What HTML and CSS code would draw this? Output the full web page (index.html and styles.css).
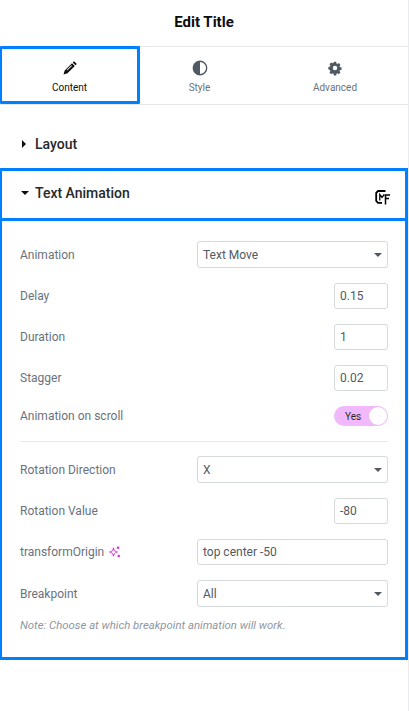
FILE: index.html
```html
<!DOCTYPE html>
<html lang="en">
<head>
<meta charset="utf-8">
<title>Edit Title</title>
<link rel="stylesheet" href="styles.css">
</head>
<body>
<div class="panel">
  <header class="title">Edit Title</header>
  <nav class="tabs">
    <div class="tab tab-active">
      <svg class="tab-icon" viewBox="0 0 16 16"><path fill="#0c0d0e" d="M12 1.200 14.800 4 13.500 5.300 10.700 2.500ZM10 3.200 12.800 6 5.500 13.300 1.500 14.500 2.700 10.500Z"/><path fill="#fff" d="M9.300 5.300 9.900 5.900 5.200 10.600 4.600 10Z"/></svg>
      <span>Content</span>
    </div>
    <div class="tab">
      <svg class="tab-icon" viewBox="0 0 16 16"><circle cx="8" cy="8" r="6.700" fill="none" stroke="#515962" stroke-width="1.400"/><path fill="#515962" d="M8 1.300A6.700 6.700 0 0 0 8 14.700Z"/></svg>
      <span>Style</span>
    </div>
    <div class="tab tab-last">
      <svg class="tab-icon" viewBox="-1 -1 18 18"><path fill="#515962" fill-rule="evenodd" d="M6.700 1h2.600l.4 1.900 1 .5 1.700-.9 1.700 1.900-1 1.600.4 1 1.900.5v2.600l-1.900.4-.4 1 1 1.700-1.800 1.800-1.600-1-1 .4-.4 1.900H6.700l-.4-1.900-1-.4-1.700 1-1.800-1.800 1-1.700-.4-1L.5 9.400V6.800l1.900-.5.4-1-1-1.600 1.800-1.900 1.700.9 1-.5ZM8 5.500a2.500 2.500 0 1 0 0 5 2.500 2.500 0 0 0 0-5Z"/></svg>
      <span>Advanced</span>
    </div>
  </nav>

  <section class="layout-head">
    <span class="caret-right"></span>
    <h2 class="section-title">Layout</h2>
  </section>

  <section class="anim">
    <div class="anim-head">
      <span class="caret-down"></span>
      <h2 class="section-title">Text Animation</h2>
      <svg class="mf-logo" viewBox="0 0 15 15" fill="none" stroke="#000" stroke-width="1.500">
        <path stroke-width="1.800" d="M10.500 1H3L1.200 2.800V10.800L3 12.800H7"/>
        <path stroke-width="1.300" d="M4.800 10.500V4.500L7 7.500 9.200 4.500"/>
        <path d="M15 5H9.500M14 8.500H10.500M10.500 5V14.500"/>
      </svg>
    </div>
    <div class="fields">
      <div class="row row-select">
        <span class="label">Animation</span>
        <div class="select">Text Move<span class="select-caret"></span></div>
      </div>
      <div class="row">
        <span class="label">Delay</span>
        <div class="num">0.15</div>
      </div>
      <div class="row">
        <span class="label">Duration</span>
        <div class="num">1</div>
      </div>
      <div class="row">
        <span class="label">Stagger</span>
        <div class="num">0.02</div>
      </div>
      <div class="row row-toggle">
        <span class="label">Animation on scroll</span>
        <div class="toggle"><span class="toggle-text">Yes</span><span class="knob"></span></div>
      </div>
      <hr class="divider">
      <div class="row row-select">
        <span class="label">Rotation Direction</span>
        <div class="select">X<span class="select-caret"></span></div>
      </div>
      <div class="row">
        <span class="label">Rotation Value</span>
        <div class="num">-80</div>
      </div>
      <div class="row">
        <span class="label label-ai">transformOrigin
          <svg class="spark" viewBox="0 0 12 12" fill="none" stroke="#e32fe0" stroke-width="1.100"><path d="M4.500 1.800C4.800 4.300 5.300 5.200 8.500 6 5.300 6.800 4.800 7.700 4.500 10.200 4.200 7.700 3.700 6.800.5 6 3.700 5.200 4.200 4.300 4.500 1.800Z"/><path stroke-width="1.400" d="M9 .5V3M7.800 1.700H10.300M9.800 8.700V11.200M8.500 10H11"/></svg>
        </span>
        <div class="text-input">top center -50</div>
      </div>
      <div class="row row-select row-last">
        <span class="label">Breakpoint</span>
        <div class="select">All<span class="select-caret"></span></div>
      </div>
      <p class="note">Note: Choose at which breakpoint animation will work.</p>
    </div>
  </section>
</div>
</body>
</html>
```

FILE: styles.css
```css
* { box-sizing: border-box; }
html, body { margin: 0; height: 711px; overflow: hidden; background: #fff; }
body { font-family: Roboto, "Liberation Sans", sans-serif; }
.panel { width: 409px; height: 711px; border-right: 1px solid #e9ebed; }

.title {
  height: 46px;
  padding-top: 13px;
  text-align: center;
  font-size: 15px;
  line-height: 18px;
  font-weight: 700;
  color: #0c0d0e;
}

.tabs {
  display: grid;
  grid-template-columns: 140px 119px 1fr;
  height: 59px;
  border-top: 1px solid #e6e8ea;
  border-bottom: 1px solid #e6e8ea;
}
.tab {
  display: flex;
  flex-direction: column;
  align-items: center;
  padding-top: 13px;
  gap: 5px;
  font-size: 10px;
  line-height: 13px;
  color: #69727d;
}
.tab-last { padding-left: 3px; }
.tab-active {
  height: 58px;
  margin-top: -1px;
  padding-top: 11px;
  border: 3px solid #007fff;
  border-left-width: 2px;
  border-radius: 1px;
  color: #0c0d0e;
}
.tab-icon { width: 16px; height: 16px; display: block; }

.layout-head {
  display: flex;
  align-items: center;
  height: 63px;
  padding: 15px 0 0 22px;
}
.section-title {
  margin: 0;
  font-size: 14px;
  line-height: 16px;
  font-weight: 500;
  color: #26292c;
}
.caret-right {
  width: 0; height: 0;
  margin-right: 9px;
  border-left: 4px solid #0c0d0e;
  border-top: 4px solid transparent;
  border-bottom: 4px solid transparent;
}
.caret-down {
  width: 0; height: 0;
  margin-right: 6px;
  border-top: 4px solid #0c0d0e;
  border-left: 4.5px solid transparent;
  border-right: 4.5px solid transparent;
}

.anim {
  height: 492px;
  border: solid #007fff;
  border-width: 3px 3px 3px 2px;
}
.anim-head {
  display: flex;
  align-items: center;
  height: 50px;
  padding: 0 15px 4px 19px;
  border-bottom: 3px solid #007fff;
}
.mf-logo { width: 15px; height: 15px; margin-left: auto; margin-top: 9px; }

.fields { padding: 20px 17px 0 18px; }
.row {
  display: flex;
  align-items: center;
  justify-content: space-between;
  margin-bottom: 15px;
}
.label { font-size: 12px; line-height: 15px; color: #69727d; }
.row-select .label { margin-top: 2px; }
.label-ai { display: flex; align-items: center; gap: 5px; }
.spark { width: 12px; height: 12px; }

.select, .num, .text-input {
  display: flex;
  align-items: center;
  border: 1px solid #d5d8dc;
  border-radius: 3px;
  font-size: 12px;
  color: #515962;
  padding-left: 5px;
  background: #fff;
}
.select { position: relative; width: 191px; height: 27px; }
.num { width: 54px; height: 26px; }
.text-input { width: 191px; height: 26px; }
.select-caret {
  position: absolute;
  right: 5px;
  top: 11px;
  border-top: 4px solid #515962;
  border-left: 4px solid transparent;
  border-right: 4px solid transparent;
}

.row-toggle { height: 20px; margin-bottom: 15px; }
.toggle {
  display: flex;
  align-items: center;
  width: 54px;
  height: 20px;
  padding: 0 1px 0 11px;
  border-radius: 10px;
  background: #f1b9fb;
}
.toggle-text { font-size: 10px; color: #26292c; }
.knob {
  width: 18px; height: 18px;
  margin-left: auto;
  border-radius: 50%;
  background: #fff;
}
.divider { height: 1px; margin: 0 0 14px; border: 0; background: #e6e8ea; }
.row-last { margin-bottom: 0; }
.note {
  margin: 11px 0 0;
  font-size: 11.35px;
  line-height: 14px;
  font-style: italic;
  color: #8f969f;
}
```
